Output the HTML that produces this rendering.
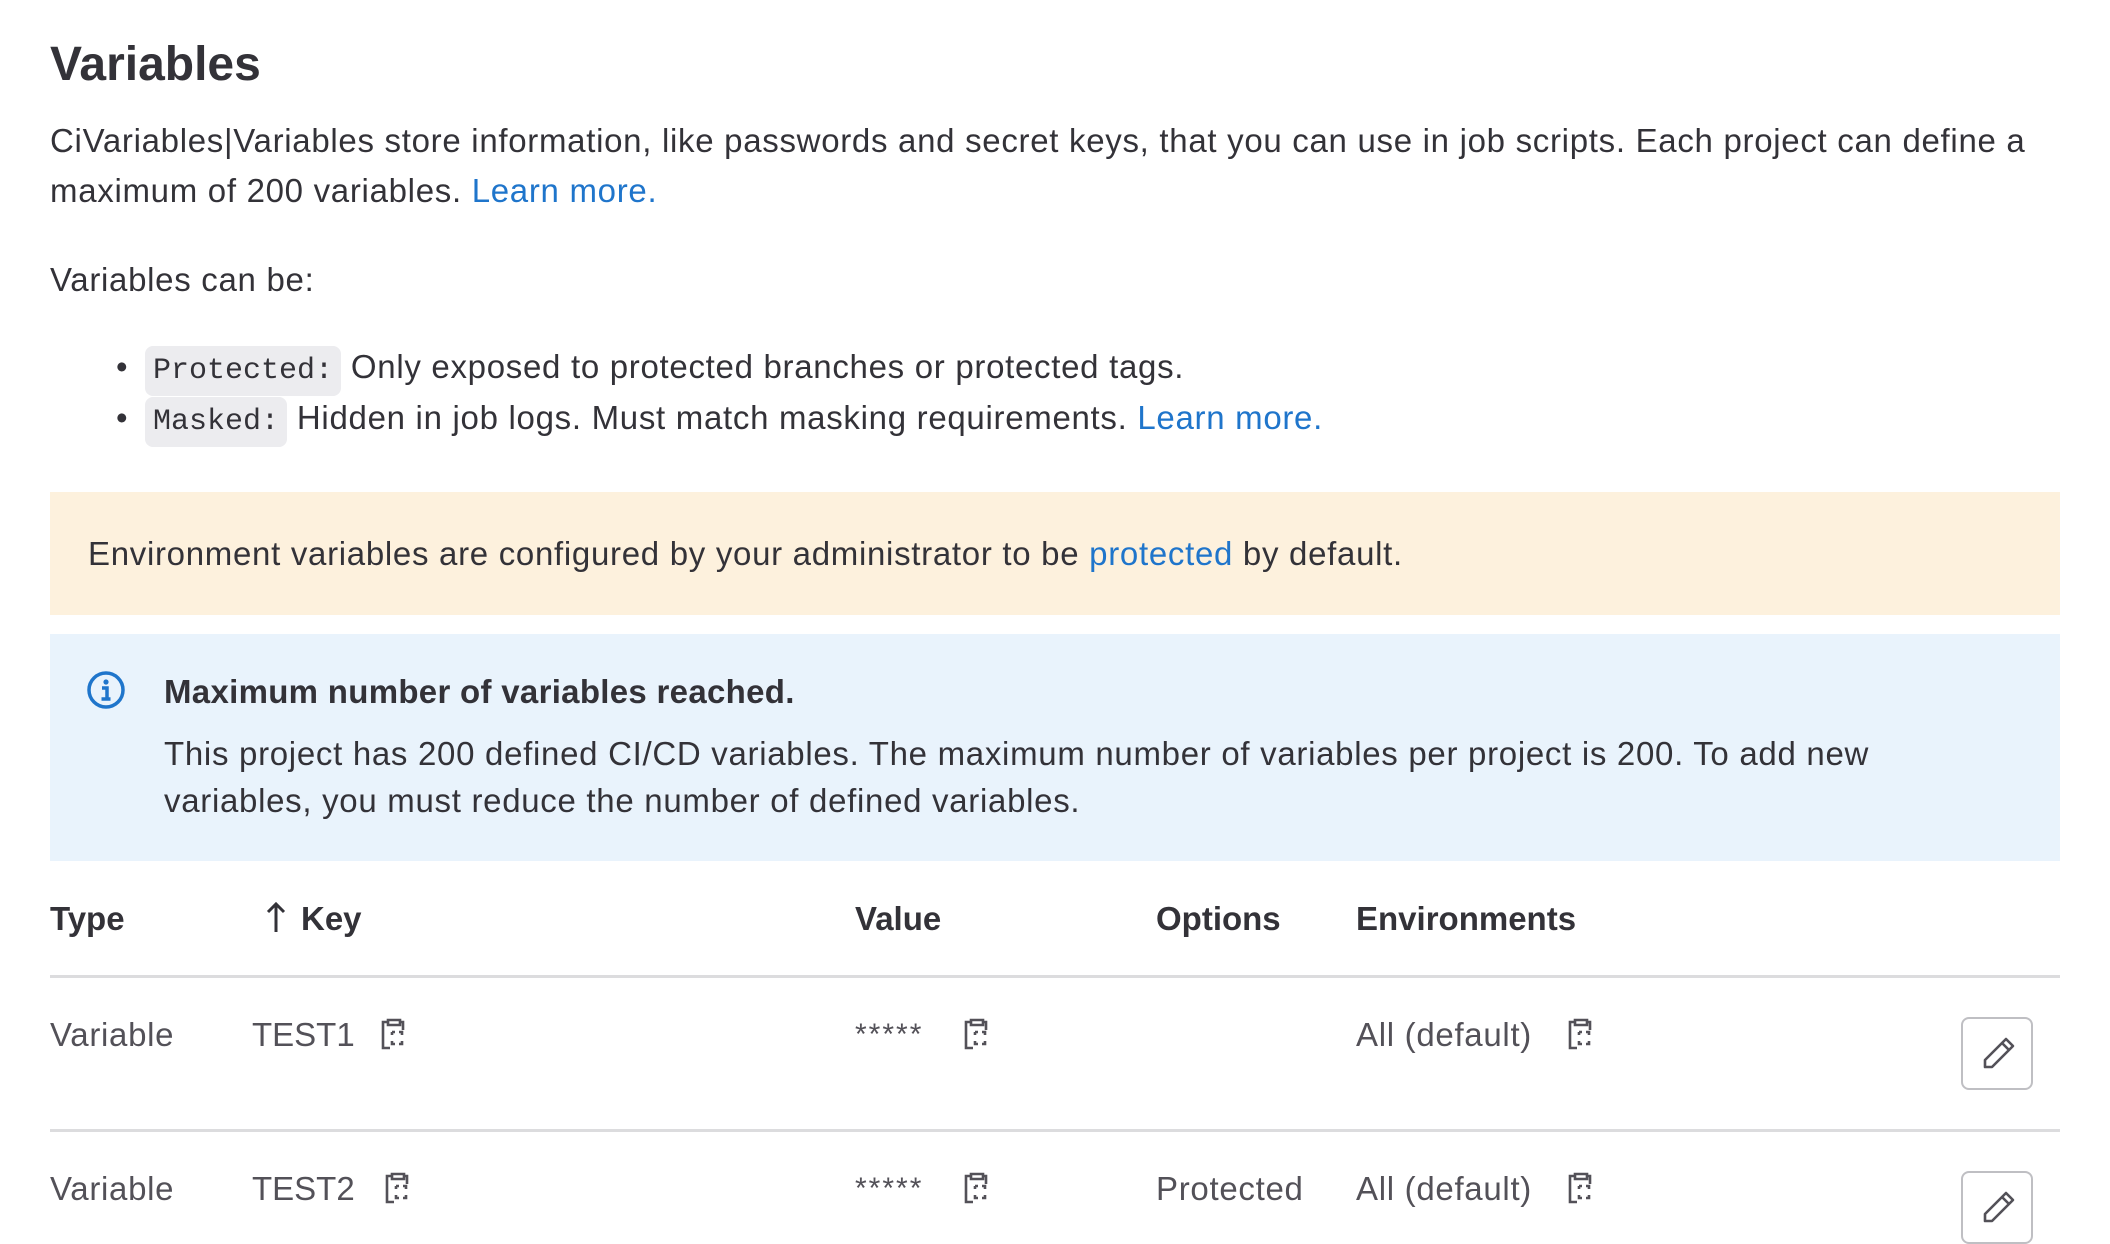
<!DOCTYPE html>
<html><head><meta charset="utf-8"><style>
*{margin:0;padding:0;box-sizing:border-box}
body{width:2110px;height:1204px;overflow:hidden;background:#fff;font-family:"Liberation Sans",sans-serif;color:#333238;position:relative;font-size:32px}
.a{position:absolute;white-space:nowrap;line-height:1}
.p{letter-spacing:0.7px}
a{color:#1f75cb;text-decoration:none}
.code{font-family:"Liberation Mono",monospace;background:#ececef;border-radius:8px;padding:8px 8px;font-size:30px;letter-spacing:0}
.th{font-weight:bold;color:#333238}
.td{color:#535158}
.line{position:absolute;left:50px;width:2010px;height:3px;background:#dcdcde}
.btn{position:absolute;left:1961px;width:72px;height:73px;border:2px solid #bfbfc3;border-radius:8px;background:#fff}
</style></head><body>
<div class="a" style="left:50px;top:41px;font-size:48px;font-weight:bold">Variables</div>
<div class="a p" style="left:50px;top:124px;font-size:33px">CiVariables|Variables store information, like passwords and secret keys, that you can use in job scripts. Each project can define a</div>
<div class="a p" style="left:50px;top:174px;font-size:33px">maximum of 200 variables. <a>Learn more.</a></div>
<div class="a p" style="left:50px;top:263px;font-size:33px">Variables can be:</div>
<div class="a" style="left:116px;top:350px;font-size:33px">•</div>
<div class="a p" style="left:145px;top:350px;font-size:33px"><span class="code">Protected:</span> Only exposed to protected branches or protected tags.</div>
<div class="a" style="left:116px;top:401px;font-size:33px">•</div>
<div class="a p" style="left:145px;top:401px;font-size:33px"><span class="code">Masked:</span> Hidden in job logs. Must match masking requirements. <a>Learn more.</a></div>
<div style="position:absolute;left:50px;top:492px;width:2010px;height:123px;background:#fdf1dd"></div>
<div class="a p" style="left:88px;top:537px;font-size:33px">Environment variables are configured by your administrator to be <a>protected</a> by default.</div>
<div style="position:absolute;left:50px;top:634px;width:2010px;height:227px;background:#e9f3fc"></div>
<svg style="position:absolute;left:86px;top:670px" width="40" height="40" viewBox="0 0 40 40"><circle cx="20" cy="20" r="17" fill="none" stroke="#1f75cb" stroke-width="3.5"/><circle cx="20" cy="12" r="2.6" fill="#1f75cb"/><path d="M16 18h5v11M15.5 29h9" fill="none" stroke="#1f75cb" stroke-width="3.5"/></svg>
<div class="a" style="left:164px;top:675px;font-size:33px;font-weight:bold;letter-spacing:0.3px">Maximum number of variables reached.</div>
<div class="a p" style="left:164px;top:737px;font-size:33px">This project has 200 defined CI/CD variables. The maximum number of variables per project is 200. To add new</div>
<div class="a p" style="left:164px;top:784px;font-size:33px">variables, you must reduce the number of defined variables.</div>
<div class="a th" style="left:50px;top:902px;font-size:33px">Type</div>
<svg style="position:absolute;left:265px;top:900px" width="22" height="34" viewBox="0 0 22 34"><path d="M11 32V4M3 12l8-8 8 8" fill="none" stroke="#333238" stroke-width="3"/></svg>
<div class="a th" style="left:301px;top:902px;font-size:33px">Key</div>
<div class="a th" style="left:855px;top:902px;font-size:33px">Value</div>
<div class="a th" style="left:1156px;top:902px;font-size:33px">Options</div>
<div class="a th" style="left:1356px;top:902px;font-size:33px">Environments</div>
<div class="line" style="top:975px"></div>
<div class="line" style="top:1129px"></div>
<svg width="0" height="0" style="position:absolute"><defs><g id="cp" fill="none" stroke="#535158" stroke-width="2.6"><path d="M8 6H3v26h7"/><path d="M8 4h12v5H8z"/><path d="M20 6h3v8"/><path d="M12 16h3M19 16h3v3M12 16v3M12 25v3h3M22 25v3h-3"/></g></defs></svg>
<div class="a td p" style="left:50px;top:1018px;font-size:33px">Variable</div>
<div class="a td" style="left:252px;top:1018px;font-size:33px">TEST1</div>
<svg style="position:absolute;left:380px;top:1016px" width="28" height="36"><use href="#cp"/></svg>
<div class="a td" style="left:855px;top:1020px;font-size:30px;letter-spacing:2px">*****</div>
<svg style="position:absolute;left:963px;top:1016px" width="28" height="36"><use href="#cp"/></svg>
<div class="a td p" style="left:1356px;top:1018px;font-size:33px">All (default)</div>
<svg style="position:absolute;left:1567px;top:1016px" width="28" height="36"><use href="#cp"/></svg>
<div class="btn" style="top:1017px"><svg style="position:absolute;left:16px;top:16px" width="38" height="38" viewBox="0 0 38 38"><path d="M27 4l7 7L13 32H6v-7z M23 8l7 7" fill="none" stroke="#535158" stroke-width="2.6" stroke-linejoin="round"/></svg></div>
<div class="a td p" style="left:50px;top:1172px;font-size:33px">Variable</div>
<div class="a td" style="left:252px;top:1172px;font-size:33px">TEST2</div>
<svg style="position:absolute;left:384px;top:1170px" width="28" height="36"><use href="#cp"/></svg>
<div class="a td" style="left:855px;top:1174px;font-size:30px;letter-spacing:2px">*****</div>
<svg style="position:absolute;left:963px;top:1170px" width="28" height="36"><use href="#cp"/></svg>
<div class="a td p" style="left:1156px;top:1172px;font-size:33px">Protected</div>
<div class="a td p" style="left:1356px;top:1172px;font-size:33px">All (default)</div>
<svg style="position:absolute;left:1567px;top:1170px" width="28" height="36"><use href="#cp"/></svg>
<div class="btn" style="top:1171px"><svg style="position:absolute;left:16px;top:16px" width="38" height="38" viewBox="0 0 38 38"><path d="M27 4l7 7L13 32H6v-7z M23 8l7 7" fill="none" stroke="#535158" stroke-width="2.6" stroke-linejoin="round"/></svg></div>
</body></html>
